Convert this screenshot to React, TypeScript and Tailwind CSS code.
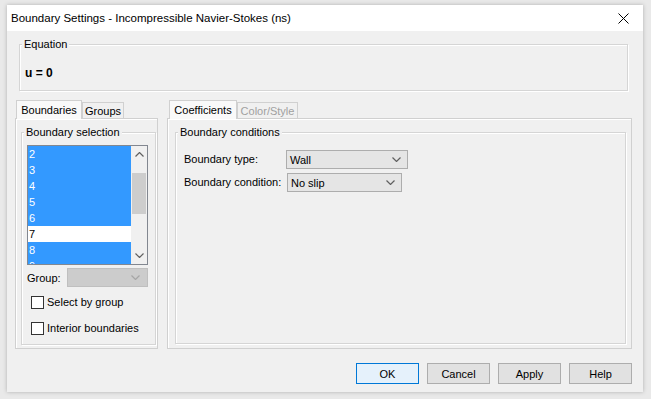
import type { ReactNode } from 'react'

const boundaries = [
  { id: 2, selected: true },
  { id: 3, selected: true },
  { id: 4, selected: true },
  { id: 5, selected: true },
  { id: 6, selected: true },
  { id: 7, selected: false },
  { id: 8, selected: true },
]

export default function App() {
  return (
    <div className="h-[399px] w-[651px] overflow-hidden bg-[#e9e9e9] pt-[5px] pl-[7px] font-['Liberation_Sans',Arial,sans-serif] text-[11px] leading-[16px] whitespace-nowrap text-black">
      <div className="flex h-[387px] w-[636px] flex-col bg-[#f0f0f0] shadow-[0_0_4px_rgba(0,0,0,0.25)]">
        <div className="flex h-[26px] items-center justify-between bg-white pr-[14px] pl-[4px]">
          <span className="text-[11.5px]">Boundary Settings - Incompressible Navier-Stokes (ns)</span>
          <svg width="11" height="11" viewBox="0 0 11 11" className="text-black">
            <path d="M0.5 0.5 L10.5 10.5 M10.5 0.5 L0.5 10.5" stroke="currentColor" strokeWidth="1" />
          </svg>
        </div>

        <div className="flex flex-1 flex-col">
          <Group label="Equation" className="mt-[13px] ml-[12px] h-[47px] w-[609px]">
            <p className="mt-[20px] ml-[5px] text-[12px] font-bold">u = 0</p>
          </Group>

          <div className="mt-[9px] ml-[8px] flex gap-[9px]">
            <div className="w-[143px]">
              <div className="flex h-[18px] items-end pl-[1px]">
                <Tab active label="Boundaries" width="w-[66px]" />
                <Tab label="Groups" width="w-[42px]" />
              </div>
              <Panel className="h-[231px] pt-[13px] pr-[3px] pl-[5px]">
                <Group label="Boundary selection" className="h-[213px] w-[135px]">
                  <div className="mt-[12px] ml-[5px] flex h-[120px] w-[121px] overflow-hidden border border-[#828790] bg-white">
                    <ul className="h-[118px] flex-1 overflow-hidden">
                      {boundaries.map((b) => (
                        <li
                          className={`h-[16px] pl-[1px] leading-[16px] ${b.selected ? 'bg-[#3399ff] text-white' : 'bg-white text-black'}`}
                          key={b.id}
                        >
                          {b.id}
                        </li>
                      ))}
                      <li className="h-[6px] overflow-hidden bg-[#3399ff] pl-[1px] leading-[16px] text-white">9</li>
                    </ul>
                    <div className="flex w-[16px] flex-col bg-[#f0f0f0]">
                      <div className="flex h-[17px] items-center justify-center">
                        <Chevron up className="text-[#606060]" />
                      </div>
                      <div className="flex-1 px-[1px] pt-[10px]">
                        <div className="h-[41px] w-full bg-[#cdcdcd]" />
                      </div>
                      <div className="flex h-[17px] items-center justify-center">
                        <Chevron className="text-[#606060]" />
                      </div>
                    </div>
                  </div>

                  <div className="mt-[3px] ml-[5px] flex h-[19px] w-[121px] items-center justify-between">
                    <span>Group:</span>
                    <div className="flex h-[19px] w-[81px] items-center justify-end border border-[#bfbfbf] bg-[#cccccc] pr-[7px]">
                      <Chevron className="text-[#a6a6a6]" />
                    </div>
                  </div>

                  <Check className="mt-[7px]" label="Select by group" />
                  <Check className="mt-[10px]" label="Interior boundaries" />
                </Group>
              </Panel>
            </div>

            <div className="w-[465px]">
              <div className="flex h-[18px] items-end pl-[2px]">
                <Tab active label="Coefficients" width="w-[68px]" />
                <Tab disabled label="Color/Style" width="w-[61px]" />
              </div>
              <Panel className="h-[231px] pt-[13px] pr-[7px] pl-[7px]">
                <Group label="Boundary conditions" className="h-[212px] w-[451px]">
                  <div className="mt-[17px] ml-[8px] flex items-center">
                    <span className="w-[102px] pb-[2px]">Boundary type:</span>
                    <Select value="Wall" width="w-[122px]" />
                  </div>
                  <div className="mt-[4px] ml-[8px] flex items-center">
                    <span className="w-[103px] pb-[2px]">Boundary condition:</span>
                    <Select value="No slip" width="w-[115px]" />
                  </div>
                </Group>
              </Panel>
            </div>
          </div>

          <div className="mt-[14px] flex justify-end gap-[8px] pr-[11px]">
            <Button primary>OK</Button>
            <Button>Cancel</Button>
            <Button>Apply</Button>
            <Button>Help</Button>
          </div>
        </div>
      </div>
    </div>
  )
}

function Group({ label, className, children }: { label: string; className: string; children?: ReactNode }) {
  return (
    <div className={`relative border border-[#d5d5d5] shadow-[inset_1px_1px_0_#ffffff,1px_1px_0_#ffffff] ${className}`}>
      <span className="absolute top-[-9px] left-[2px] bg-[#f0f0f0] px-[2px] leading-[16px]">{label}</span>
      {children}
    </div>
  )
}

function Panel({ className, children }: { className: string; children: ReactNode }) {
  return (
    <div className={`border border-[#d0d0d0] bg-[#f0f0f0] shadow-[inset_1px_1px_0_#ffffff] ${className}`}>
      {children}
    </div>
  )
}

function Tab({
  label,
  width,
  active = false,
  disabled = false,
}: {
  label: string
  width: string
  active?: boolean
  disabled?: boolean
}) {
  return (
    <div
      className={`relative flex items-center justify-center border border-b-0 border-[#d0d0d0] ${width} ${
        active ? 'z-10 -mb-px h-[19px] bg-[#f9f9f9]' : 'h-[16px] bg-[#f0f0f0]'
      } ${disabled ? 'text-[#a0a0a0]' : 'text-black'}`}
    >
      {label}
    </div>
  )
}

function Select({ value, width }: { value: string; width: string }) {
  return (
    <div className={`flex h-[19px] items-center justify-between border border-[#adadad] bg-[#e5e5e5] pr-[6px] pl-[3px] ${width}`}>
      <span>{value}</span>
      <Chevron className="text-[#606060]" />
    </div>
  )
}

function Check({ label, className }: { label: string; className: string }) {
  return (
    <label className={`ml-[9px] flex items-center gap-[3px] ${className}`}>
      <span className="h-[13px] w-[13px] border border-[#333333] bg-white" />
      <span>{label}</span>
    </label>
  )
}

function Button({ children, primary = false }: { children: ReactNode; primary?: boolean }) {
  return (
    <button
      className={`flex h-[21px] w-[63px] items-center justify-center border ${
        primary ? 'border-[#0078d7] bg-[#e5f1fb]' : 'border-[#adadad] bg-[#e1e1e1]'
      }`}
      type="button"
    >
      {children}
    </button>
  )
}

function Chevron({ up = false, className }: { up?: boolean; className: string }) {
  return (
    <svg width="9" height="5" viewBox="0 0 9 5" className={className}>
      <path
        d={up ? 'M0.5 4.5 L4.5 0.5 L8.5 4.5' : 'M0.5 0.5 L4.5 4.5 L8.5 0.5'}
        fill="none"
        stroke="currentColor"
        strokeWidth="1.2"
      />
    </svg>
  )
}
